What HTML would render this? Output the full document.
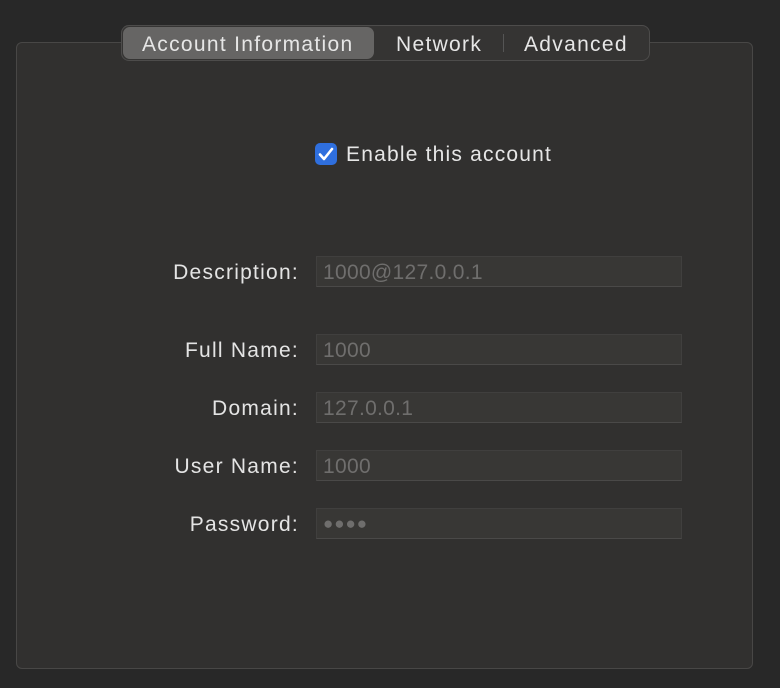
<!DOCTYPE html>
<html><head><style>
body{margin:0;width:780px;height:688px;background:#282828;font-family:"Liberation Sans",sans-serif;position:relative;overflow:hidden}
.panel{position:absolute;left:16px;top:42px;width:737px;height:627px;background:#31302f;border:1px solid #484746;border-radius:6px;box-sizing:border-box}
.tabs{position:absolute;left:121px;top:25px;width:529px;height:36px;background:#353433;border:1px solid #4d4c4b;border-radius:8px;box-sizing:border-box}
.sel{position:absolute;left:1px;top:1px;width:251px;height:32px;background:#666564;border-radius:7px}
.t{position:absolute;top:7px;color:#e6e6e6;font-size:21px;letter-spacing:1.3px}
.div{position:absolute;left:381px;top:8px;width:1px;height:18px;background:#555}
.cb{position:absolute;left:315px;top:143px;width:22px;height:22px;background:#2f6fde;border-radius:5px}
.lbl{position:absolute;right:481px;color:#e4e4e4;font-size:21px;letter-spacing:1.25px}
.f{position:absolute;left:316px;width:366px;height:31px;background:#383735;border:1px solid #403f3e;border-bottom-color:#4a4948;box-sizing:border-box;color:#6f6e6d;font-size:21px;letter-spacing:0.3px;padding:4px 0 0 6px}
</style></head><body>
<div class="panel"></div>
<div class="tabs"><div class="sel"></div>
<span class="t" style="left:20px">Account Information</span>
<span class="t" style="left:274px">Network</span>
<div class="div"></div>
<span class="t" style="left:402px">Advanced</span></div>
<div class="cb"><svg width="22" height="22"><path d="M5 11.5l4 4.5 8-10" stroke="#fff" stroke-width="2.6" fill="none" stroke-linecap="round" stroke-linejoin="round"/></svg></div>
<span style="position:absolute;left:346px;top:143px;color:#e6e6e6;font-size:21px;letter-spacing:1.2px">Enable this account</span>
<span class="lbl" style="top:261px">Description:</span><div class="f" style="top:256px">1000@127.0.0.1</div>
<span class="lbl" style="top:339px">Full Name:</span><div class="f" style="top:334px">1000</div>
<span class="lbl" style="top:397px">Domain:</span><div class="f" style="top:392px">127.0.0.1</div>
<span class="lbl" style="top:455px">User Name:</span><div class="f" style="top:450px">1000</div>
<span class="lbl" style="top:513px">Password:</span><div class="f" style="top:508px;font-size:17px;padding-top:5px;letter-spacing:1px">●●●●</div>
</body></html>
